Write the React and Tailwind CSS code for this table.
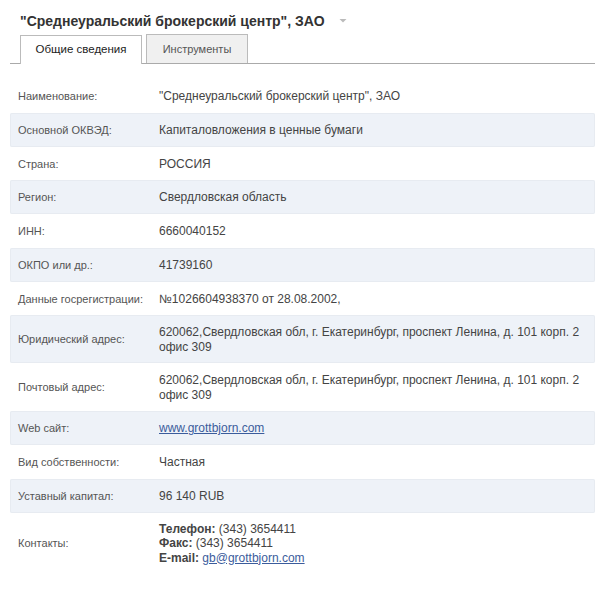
import React from "react";

const rows = [
  { label: "Наименование:", value: "\"Среднеуральский брокерский центр\", ЗАО" },
  { label: "Основной ОКВЭД:", value: "Капиталовложения в ценные бумаги" },
  { label: "Страна:", value: "РОССИЯ" },
  { label: "Регион:", value: "Свердловская область" },
  { label: "ИНН:", value: "6660040152" },
  { label: "ОКПО или др.:", value: "41739160" },
  { label: "Данные госрегистрации:", value: "№1026604938370 от 28.08.2002," },
  { label: "Юридический адрес:", value: "620062,Свердловская обл, г. Екатеринбург, проспект Ленина, д. 101 корп. 2 офис 309", two: true },
  { label: "Почтовый адрес:", value: "620062,Свердловская обл, г. Екатеринбург, проспект Ленина, д. 101 корп. 2 офис 309", two: true },
  { label: "Web сайт:", value: <a href="#" className="text-[#3b5c9c] underline">www.grottbjorn.com</a> },
  { label: "Вид собственности:", value: "Частная" },
  { label: "Уставный капитал:", value: "96 140 RUB" },
  {
    label: "Контакты:",
    contacts: true,
    value: (
      <div className="leading-[14.5px]">
        <div><b className="text-[#444]">Телефон:</b> (343) 3654411</div>
        <div><b className="text-[#444]">Факс:</b> (343) 3654411</div>
        <div><b className="text-[#444]">E-mail:</b> <a href="#" className="text-[#3b5c9c] underline">gb@grottbjorn.com</a></div>
      </div>
    ),
  },
];

export default function App() {
  return (
    <div className="w-[605px] h-[589px] bg-white font-['Liberation_Sans',Arial,sans-serif] text-[12px] text-[#555]">
      <div className="flex items-center pl-5 pt-[8px] h-[33px]">
        <h1 className="text-[14px] font-bold text-[#333] leading-[18px]">"Среднеуральский брокерский центр", ЗАО</h1>
        <svg width="10" height="6" viewBox="0 0 10 6" className="ml-[13px] mt-[1px]">
          <path d="M1.5 1 L8.5 1 L5 4.5 Z" fill="#bbb" />
        </svg>
      </div>
      <div className="mx-[10px] flex items-end border-b border-[#aaa] pl-[10px] h-[31px]">
        <div className="h-[29px] -mb-px w-[122px] border border-b-0 border-[#bbb] bg-white flex items-center justify-center text-[#222] text-[11.5px]">
          Общие сведения
        </div>
        <div className="h-[29px] ml-[4px] w-[102px] border border-b-0 border-[#bbb] bg-[#f0f0f0] flex items-center justify-center text-[#555] text-[11px]">
          Инструменты
        </div>
      </div>
      <div className="mx-[10px] mt-[15px]">
        {rows.map((r, i) => (
          <div
            key={i}
            className={
              "flex items-center leading-[15px] rounded-[2px] " +
              (i % 2 === 1 ? "bg-[#eef2f8] shadow-[inset_0_0_0_1px_#e7ebf1] " : "") +
              (r.contacts ? "pt-[9px] pb-[13px]" : r.two ? "pt-[9.5px] pb-[8.5px]" : "pt-[10px] pb-[8.75px]")
            }
          >
            <div className="w-[149px] shrink-0 pl-[8px] text-[11px]">{r.label}</div>
            <div className="flex-1 text-[#444] pr-[10px]">{r.value}</div>
          </div>
        ))}
      </div>
    </div>
  );
}
